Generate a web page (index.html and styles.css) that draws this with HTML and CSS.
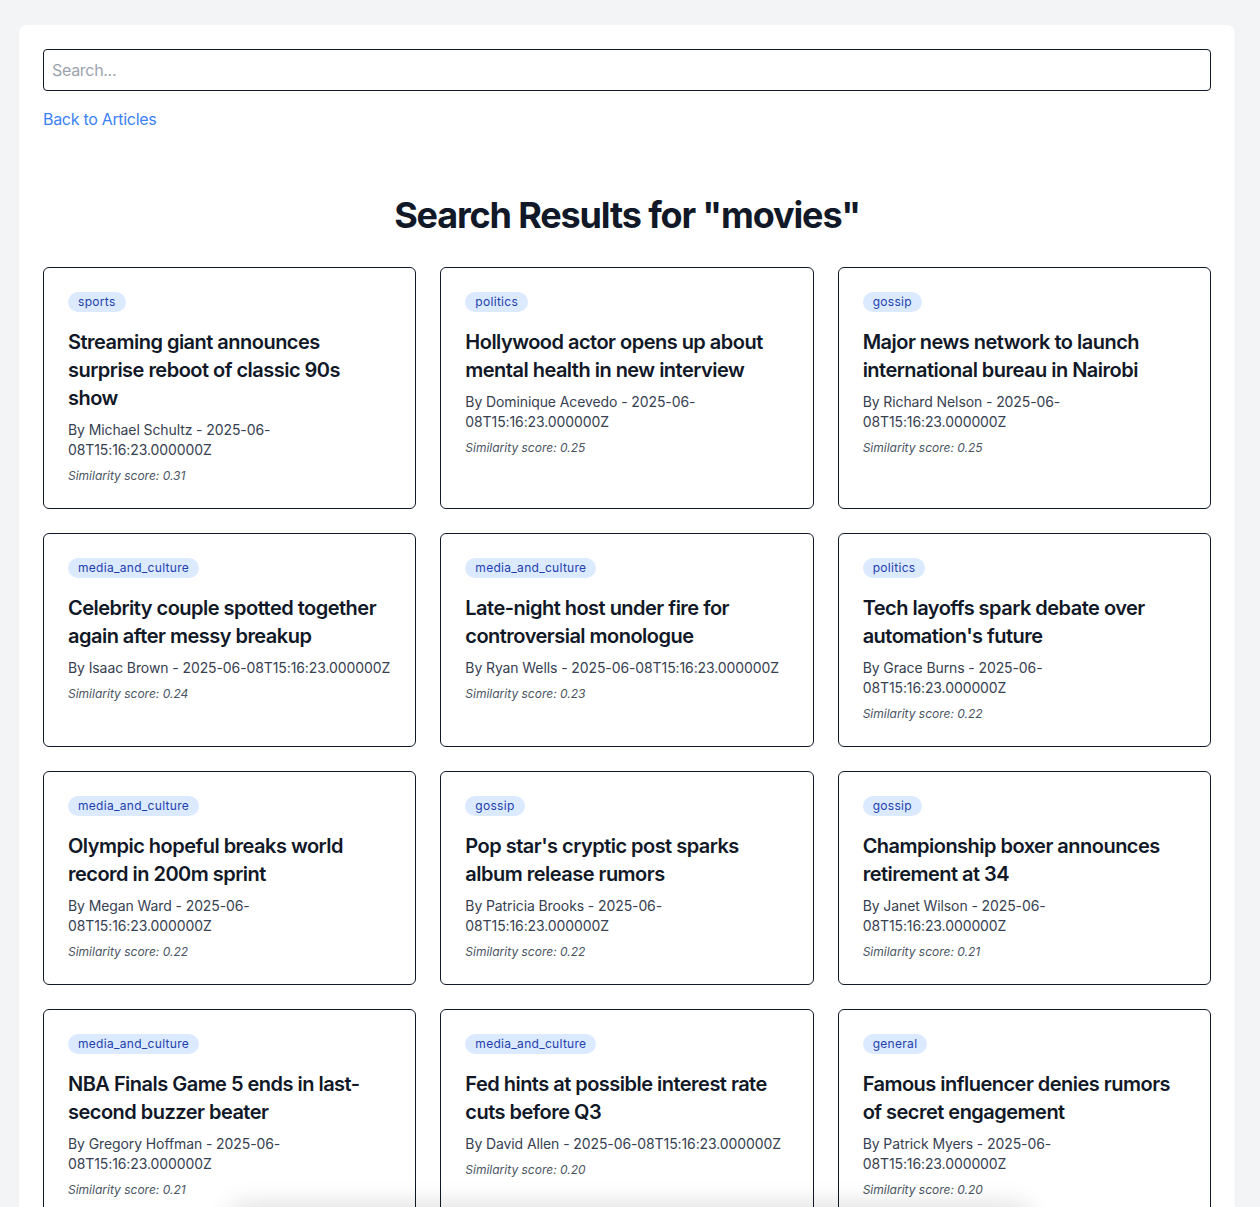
FILE: index.html
```html
<!DOCTYPE html>
<html lang="en">
<head>
<meta charset="utf-8">
<title>Search Results</title>
<link rel="stylesheet" href="styles.css">
</head>
<body>
<div class="page">
  <div class="panel">
    <input class="search" type="text" placeholder="Search...">
    <a class="back" href="#">Back to Articles</a>
    <h1 class="heading">Search Results for "movies"</h1>
    <div class="grid">
      <div class="card"><span class="badge">sports</span><h2 class="title">Streaming giant announces surprise reboot of classic 90s show</h2><p class="meta">By Michael Schultz - 2025-06-08T15:16:23.000000Z</p><p class="score">Similarity score: 0.31</p></div>
      <div class="card"><span class="badge">politics</span><h2 class="title">Hollywood actor opens up about mental health in new interview</h2><p class="meta">By Dominique Acevedo - 2025-06-08T15:16:23.000000Z</p><p class="score">Similarity score: 0.25</p></div>
      <div class="card"><span class="badge">gossip</span><h2 class="title">Major news network to launch international bureau in Nairobi</h2><p class="meta">By Richard Nelson - 2025-06-08T15:16:23.000000Z</p><p class="score">Similarity score: 0.25</p></div>
      <div class="card"><span class="badge">media_and_culture</span><h2 class="title">Celebrity couple spotted together again after messy breakup</h2><p class="meta">By Isaac Brown - 2025-06-08T15:16:23.000000Z</p><p class="score">Similarity score: 0.24</p></div>
      <div class="card"><span class="badge">media_and_culture</span><h2 class="title">Late-night host under fire for controversial monologue</h2><p class="meta">By Ryan Wells - 2025-06-08T15:16:23.000000Z</p><p class="score">Similarity score: 0.23</p></div>
      <div class="card"><span class="badge">politics</span><h2 class="title">Tech layoffs spark debate over automation's future</h2><p class="meta">By Grace Burns - 2025-06-08T15:16:23.000000Z</p><p class="score">Similarity score: 0.22</p></div>
      <div class="card"><span class="badge">media_and_culture</span><h2 class="title">Olympic hopeful breaks world record in 200m sprint</h2><p class="meta">By Megan Ward - 2025-06-08T15:16:23.000000Z</p><p class="score">Similarity score: 0.22</p></div>
      <div class="card"><span class="badge">gossip</span><h2 class="title">Pop star's cryptic post sparks album release rumors</h2><p class="meta">By Patricia Brooks - 2025-06-08T15:16:23.000000Z</p><p class="score">Similarity score: 0.22</p></div>
      <div class="card"><span class="badge">gossip</span><h2 class="title">Championship boxer announces retirement at 34</h2><p class="meta">By Janet Wilson - 2025-06-08T15:16:23.000000Z</p><p class="score">Similarity score: 0.21</p></div>
      <div class="card"><span class="badge">media_and_culture</span><h2 class="title">NBA Finals Game 5 ends in last-second buzzer beater</h2><p class="meta">By Gregory Hoffman - 2025-06-08T15:16:23.000000Z</p><p class="score">Similarity score: 0.21</p></div>
      <div class="card"><span class="badge">media_and_culture</span><h2 class="title">Fed hints at possible interest rate cuts before Q3</h2><p class="meta">By David Allen - 2025-06-08T15:16:23.000000Z</p><p class="score">Similarity score: 0.20</p></div>
      <div class="card"><span class="badge">general</span><h2 class="title">Famous influencer denies rumors of secret engagement</h2><p class="meta">By Patrick Myers - 2025-06-08T15:16:23.000000Z</p><p class="score">Similarity score: 0.20</p></div>
    </div>
  </div>
</div>
<div class="floater"></div>
</body>
</html>
```

FILE: styles.css
```css
* { box-sizing: border-box; }
html, body { margin: 0; padding: 0; }
body {
  background: #f3f4f6;
  font-family: Inter, "Noto Sans", "Liberation Sans", sans-serif;
  color: #111827;
}
.page {
  padding: 25px 25px 40px 19px;
}
.panel {
  background: #ffffff;
  border-radius: 8px;
  box-shadow: 0 1px 2px rgba(0,0,0,0.05);
  padding: 24px;
}
.search {
  display: block;
  width: 100%;
  height: 42px;
  border: 1px solid #111827;
  border-radius: 4px;
  padding: 8px;
  font-family: inherit;
  font-size: 16px;
  line-height: 24px;
  letter-spacing: -0.3px;
  color: #111827;
  outline: none;
}
.search::placeholder { color: #9ca3af; }
.back {
  display: inline-block;
  margin-top: 16px;
  font-size: 16px;
  line-height: 24px;
  letter-spacing: -0.3px;
  color: #3b82f6;
  text-decoration: none;
}
.heading {
  margin: 64px 0 32px;
  text-align: center;
  font-size: 36px;
  line-height: 40px;
  font-weight: 700;
  letter-spacing: -1.15px;
  color: #111827;
}
.grid {
  display: grid;
  grid-template-columns: repeat(3, 1fr);
  gap: 24px;
}
.card {
  border: 1px solid #111827;
  border-radius: 6px;
  padding: 24px;
  display: flex;
  flex-direction: column;
  align-items: flex-start;
}
.badge {
  display: inline-block;
  background: #dbeafe;
  color: #1e40af;
  font-size: 12px;
  line-height: 16px;
  letter-spacing: 0.3px;
  padding: 2px 10px;
  border-radius: 9999px;
}
.title {
  margin: 16px 0 0;
  font-size: 20px;
  line-height: 28px;
  font-weight: 600;
  letter-spacing: -0.52px;
  color: #111827;
}
.meta {
  margin: 8px 0.6px 0 0;
  font-size: 14px;
  line-height: 20px;
  letter-spacing: -0.1px;
  color: #374151;
}
.score {
  margin: 8px 0 0;
  font-size: 12px;
  line-height: 16px;
  font-style: italic;
  color: #4b5563;
}
.floater {
  position: fixed;
  left: 230px;
  bottom: -70px;
  width: 800px;
  height: 70px;
  background: #ffffff;
  border-radius: 12px;
  box-shadow: 0 -4px 24px rgba(0,0,0,0.12);
}
```
